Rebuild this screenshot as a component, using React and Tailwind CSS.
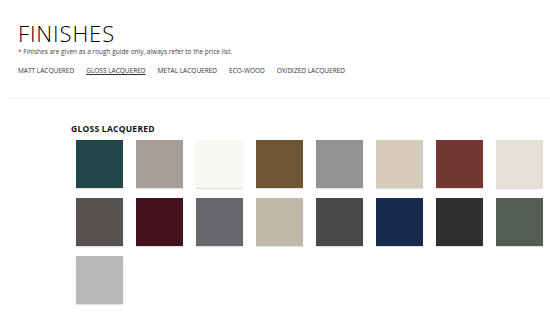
const tabs = ['MATT LACQUERED', 'GLOSS LACQUERED', 'METAL LACQUERED', 'ECO-WOOD', 'OXIDIZED LACQUERED'];

const swatches = [
  '#22474a', '#a89e95', '#f8f7f2', '#6f5531', '#929293', '#d6cbbb', '#723733', '#e4e0d8',
  '#57524f', '#44121d', '#67686d', '#c1b9a8', '#47494a', '#172a4f', '#302f31', '#545d53',
  '#b8b9bb',
];

export default function App() {
  return (
    <div className="w-[550px] h-[313px] bg-white overflow-hidden font-['Open_Sans','Liberation_Sans',sans-serif] text-[#222]">
      <header className="pl-[18px] pt-[22px]">
        <h1 className="text-[22px] leading-none font-light tracking-[0.04em] text-black">FINISHES</h1>
        <p className="mt-[4px] text-[6.5px] leading-[8px] text-[#444]">
          <span className="text-[#d0302f]">*</span> Finishes are given as a rough guide only, always refer to the price list.
        </p>
        <nav className="mt-[11px] flex gap-[12px] text-[6.5px] leading-[8px] text-[#333]">
          {tabs.map((t) => (
            <a key={t} className={t === 'GLOSS LACQUERED' ? 'underline underline-offset-1' : ''}>
              {t}
            </a>
          ))}
        </nav>
      </header>
      <div className="ml-[9px] mt-[22px] h-[2px] bg-[#f6f6f6]" />
      <section className="pl-[71px] pt-[25px]">
        <h2 className="text-[8.5px] leading-[10px] font-bold tracking-[0.03em] text-[#111]">GLOSS LACQUERED</h2>
        <div className="mt-[6px] ml-[5px] grid grid-cols-[repeat(8,47px)] gap-x-[13px] gap-y-[10px]">
          {swatches.map((c, i) => (
            <div
              key={i}
              className="h-[48px] shadow-[0_1px_1px_rgba(0,0,0,0.12)]"
              style={{ backgroundColor: c }}
            />
          ))}
        </div>
      </section>
    </div>
  );
}
